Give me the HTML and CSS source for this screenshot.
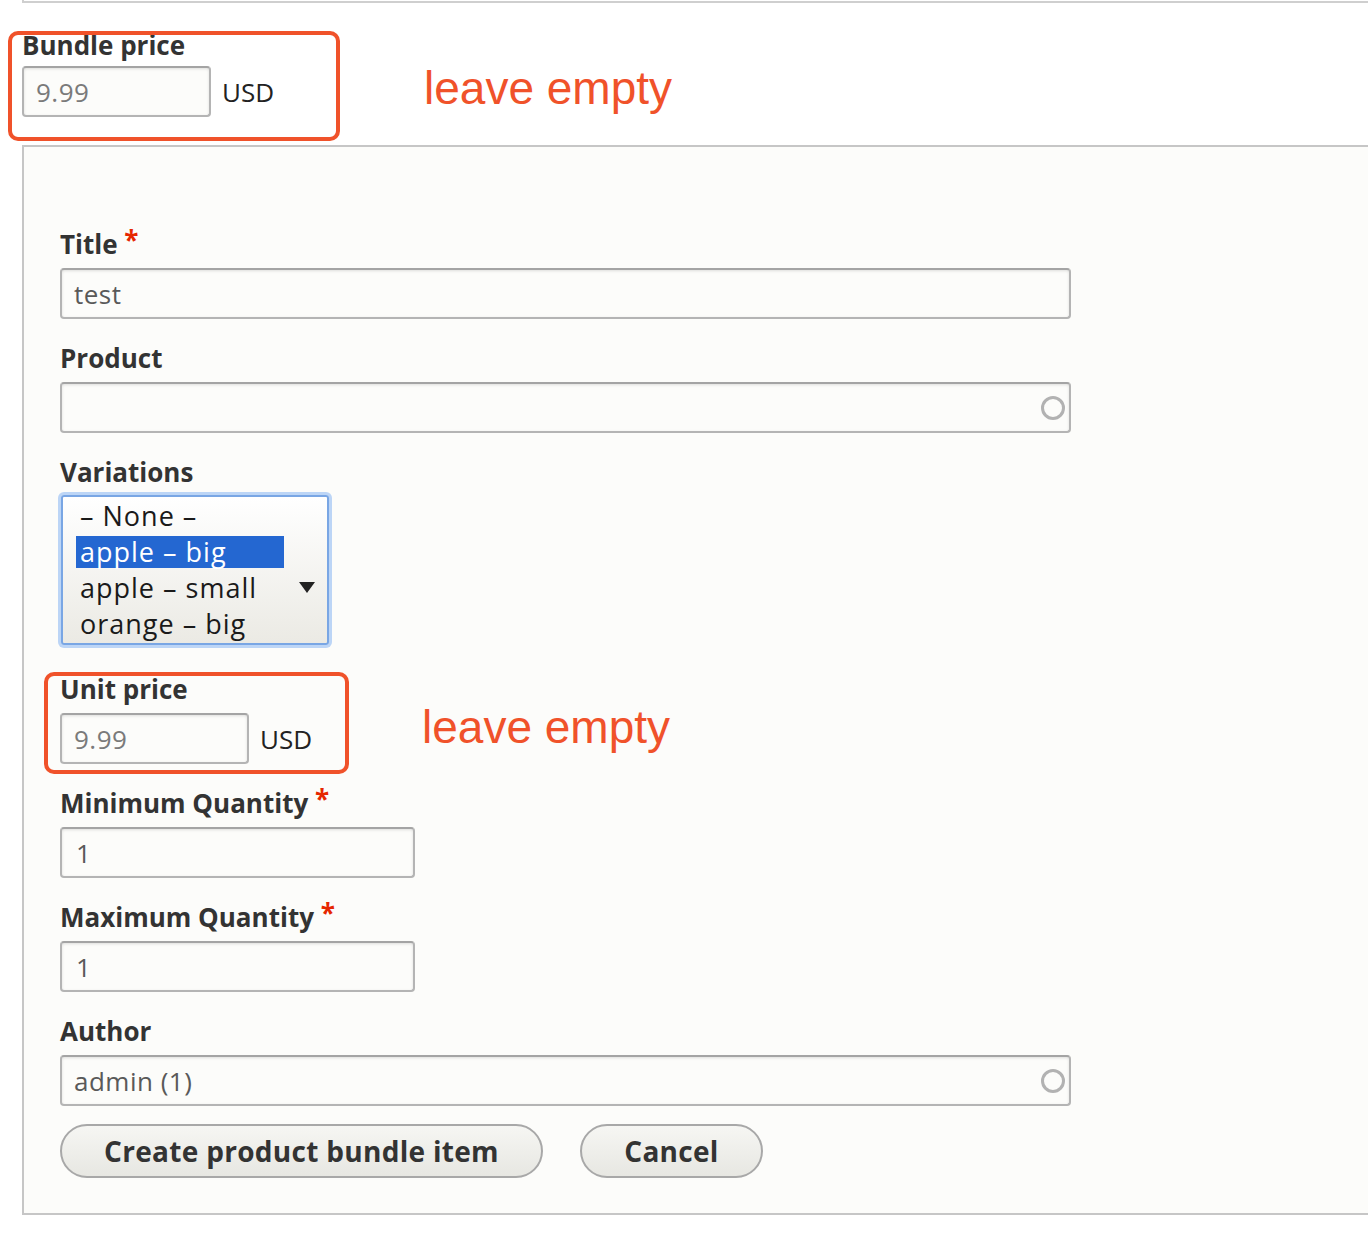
FILE: index.html
```html
<!DOCTYPE html>
<html lang="en">
<head>
    <meta charset="UTF-8">
    <title>Add product bundle item</title>
    <link rel="stylesheet" href="styles.css">
</head>
<body>

    <div class="prev-box"></div>

    <div class="bundle">
        <div class="price-row">
            <div class="price-field bundle-price">
                <label class="label">Bundle price</label>
                <div class="price-input">
                    <input class="input short" type="text" value="9.99">
                    <span class="currency">USD</span>
                </div>
                <span class="mark"></span>
            </div>
            <p class="note bundle-note">leave empty</p>
        </div>
    </div>

    <div class="box">
        <div class="field">
            <label class="label">Title <span class="req">*</span></label>
            <input class="input wide" type="text" value="test">
        </div>

        <div class="field">
            <label class="label">Product</label>
            <div class="auto">
                <input class="input wide" type="text" value="">
                <span class="throbber"></span>
            </div>
        </div>

        <div class="field select-field">
            <label class="label">Variations</label>
            <div class="select">
                <div class="option">&ndash; None &ndash;</div>
                <div class="option"><span class="selected">apple &ndash; big</span></div>
                <div class="option">apple &ndash; small</div>
                <div class="option">orange &ndash; big</div>
                <span class="arrow"></span>
            </div>
        </div>

        <div class="field">
            <div class="price-row">
                <div class="price-field unit-price">
                    <label class="label">Unit price</label>
                    <div class="price-input">
                        <input class="input short" type="text" value="9.99">
                        <span class="currency">USD</span>
                    </div>
                    <span class="mark"></span>
                </div>
                <p class="note unit-note">leave empty</p>
            </div>
        </div>

        <div class="field">
            <label class="label">Minimum Quantity <span class="req">*</span></label>
            <input class="input medium num" type="text" value="1">
        </div>

        <div class="field">
            <label class="label">Maximum Quantity <span class="req">*</span></label>
            <input class="input medium num" type="text" value="1">
        </div>

        <div class="field">
            <label class="label">Author</label>
            <div class="auto">
                <input class="input wide" type="text" value="admin (1)">
                <span class="throbber"></span>
            </div>
        </div>

        <div class="actions">
            <button class="button create">Create product bundle item</button>
            <button class="button cancel">Cancel</button>
        </div>
    </div>

</body>
</html>
```

FILE: styles.css
```css
body {
    margin: 0;
    padding: 0;
    background-color: #fff;
    font-family: "Open Sans", "DejaVu Sans", sans-serif;
    color: #333;
}

.prev-box {
    margin-left: 22px;
    height: 1px;
    border-left: 2px solid #cfcfcf;
    border-bottom: 2px solid #cfcfcf;
}

.bundle {
    padding: 24px 0 0 22px;
    height: 118px;
}

.box {
    margin-left: 22px;
    border: 2px solid #c6c6c6;
    border-right: none;
    background-color: #fcfcfa;
    padding: 79px 0 35px 36px;
}

.field {
    margin-bottom: 21px;
}

.select-field {
    margin-bottom: 26px;
}

.label {
    display: block;
    font-size: 26px;
    font-weight: bold;
    line-height: 36px;
    margin-bottom: 6px;
    color: #333;
}

.req {
    position: relative;
    top: -4px;
    color: #e62600;
    font-size: 26px;
}

.input {
    box-sizing: border-box;
    height: 51px;
    border: 2px solid #b4b4b4;
    border-top-color: #a4a4a4;
    border-radius: 4px;
    background-color: #fcfcfa;
    box-shadow: inset 0 1px 3px rgba(0, 0, 0, 0.12);
    padding: 0 12px;
    font-family: "Open Sans", "DejaVu Sans", sans-serif;
    font-size: 26px;
    letter-spacing: 0.5px;
    color: #595959;
    outline: none;
}

.wide {
    width: 1011px;
}

.medium {
    width: 355px;
}

.short {
    width: 189px;
    color: #7a7a7a;
}

.num {
    padding-left: 14px;
}

.auto {
    position: relative;
    width: 1011px;
}

.throbber {
    position: absolute;
    right: 6px;
    top: 14px;
    width: 18px;
    height: 18px;
    border: 3px solid #b2b2b2;
    border-radius: 50%;
}

/* select list, shown focused */
.select {
    position: relative;
    box-sizing: border-box;
    width: 268px;
    margin: -1px 0 0 1px;
    padding: 1px 0;
    border: 2px solid #79a6e4;
    border-radius: 3px;
    box-shadow: 0 0 0 3px #bcd5f6;
    background: linear-gradient(#ffffff, #ebeae4);
}

.option {
    height: 36px;
    line-height: 36px;
    padding-left: 17px;
    font-size: 27px;
    letter-spacing: 1px;
    color: #1a1a1a;
    white-space: nowrap;
}

.selected {
    display: inline-block;
    width: 204px;
    height: 32px;
    line-height: 32px;
    margin-left: -4px;
    padding-left: 4px;
    background-color: #2467d1;
    color: #fff;
}

.arrow {
    position: absolute;
    right: 12px;
    top: 85px;
    border-left: 8px solid transparent;
    border-right: 8px solid transparent;
    border-top: 11px solid #222;
}

/* price fields with the annotation frame */
.price-row {
    display: flex;
    align-items: flex-start;
}

.price-field {
    position: relative;
}

.price-input {
    display: flex;
    align-items: center;
}

.currency {
    margin-left: 11px;
    font-size: 26px;
    color: #222;
}

.mark {
    position: absolute;
    border: 4px solid #f0522a;
    border-radius: 10px;
}

.bundle-price .label {
    margin-bottom: 3px;
}

.bundle-price {
    width: 318px;
}

.bundle-price .mark {
    top: 4px;
    left: -14px;
    width: 324px;
    height: 102px;
}

.unit-price {
    width: 289px;
}

.unit-price .mark {
    top: 1px;
    left: -16px;
    width: 297px;
    height: 94px;
}

.note {
    margin: 0;
    font-family: "Liberation Sans", Arial, sans-serif;
    font-size: 46px;
    line-height: 50px;
    color: #f0522a;
}

.bundle-note {
    margin: 36px 0 0 84px;
}

.unit-note {
    margin: 31px 0 0 73px;
}

.actions {
    display: flex;
    gap: 37px;
    margin-top: -3px;
}

.button {
    box-sizing: border-box;
    height: 54px;
    padding: 0 30px;
    border: 2px solid #a8a8a8;
    border-radius: 27px;
    background: linear-gradient(#f6f6f3, #e7e7e2);
    font-family: "Open Sans", "DejaVu Sans", sans-serif;
    font-weight: bold;
    font-size: 28px;
    letter-spacing: 0.3px;
    white-space: nowrap;
    color: #333;
}

.create {
    width: 483px;
}

.cancel {
    width: 183px;
}
```
